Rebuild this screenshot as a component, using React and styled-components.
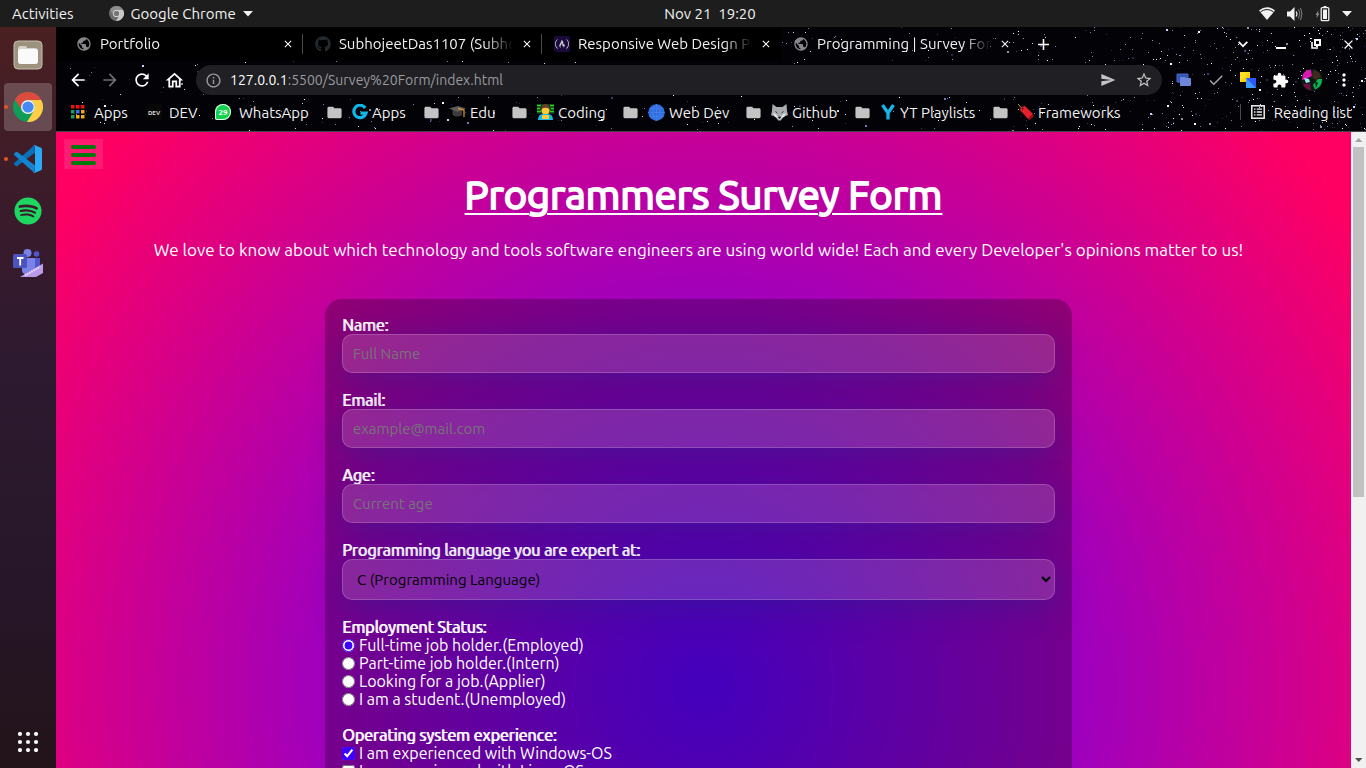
import React from "react";
import styled, { createGlobalStyle } from "styled-components";
import {
  MdArrowBack, MdArrowForward, MdRefresh, MdOutlineHome, MdInfoOutline, MdSend,
  MdStarBorder, MdExtension, MdMoreVert, MdPublic, MdCheck, MdFolder, MdAdd, MdClose,
} from "react-icons/md";
import { FaSpotify, FaGithub, FaFreeCodeCamp } from "react-icons/fa";

const Global = createGlobalStyle`
  * { box-sizing: border-box; }
  body { margin: 0; background: #000; font-family: Ubuntu, "Noto Sans", "Open Sans", sans-serif; }
  button, input, select { font-family: inherit; }
`;

const Desktop = styled.div`
  display: flex;
  flex-direction: column;
  height: 100vh;
  overflow: hidden;
`;

/* ---------- system bar ---------- */
const SystemBar = styled.header`
  display: grid;
  grid-template-columns: 1fr auto 1fr;
  align-items: center;
  flex: none;
  height: 27px;
  padding: 0 14px 0 12px;
  background: #1d1d1d;
  color: #f2f2f2;
`;
const SystemSide = styled.div`
  display: flex;
  align-items: center;
  justify-content: ${(p) => (p.$end ? "flex-end" : "flex-start")};
  gap: ${(p) => (p.$end ? "12px" : "35px")};
`;
const SystemButton = styled.button`
  display: flex;
  align-items: center;
  gap: 7px;
  height: 26px;
  padding: 0;
  border: 0;
  background: none;
  color: inherit;
  font-size: 15px;
  white-space: pre;
`;
const Clock = styled(SystemButton)`
  margin-left: 56px;
`;

/* ---------- dock ---------- */
const Workspace = styled.div`
  display: flex;
  flex: 1;
  min-height: 0;
`;
const Dock = styled.nav`
  display: flex;
  flex-direction: column;
  align-items: center;
  flex: none;
  gap: 4px;
  width: 56px;
  padding: 4px 0 2px;
  background: linear-gradient(#4a2022, #3a1b2b 25%, #2e1a30 45%, #27162a 75%, #221419);
`;
const DockItem = styled.button`
  display: flex;
  align-items: center;
  justify-content: center;
  position: relative;
  width: 48px;
  height: 48px;
  margin-top: ${(p) => (p.$last ? "auto" : "0")};
  padding: 0;
  border: 0;
  border-radius: 4px;
  background: ${(p) => (p.$active ? "rgba(255,255,255,.2)" : "none")};
  &::before {
    content: "";
    display: ${(p) => (p.$running ? "block" : "none")};
    position: absolute;
    left: 0;
    top: 22px;
    width: 4px;
    height: 4px;
    border-radius: 50%;
    background: #e95420;
  }
`;

/* ---------- browser ---------- */
const Browser = styled.div`
  display: flex;
  flex-direction: column;
  flex: 1;
  min-width: 0;
`;
const BrowserHead = styled.div`
  position: relative;
  flex: none;
  height: 105px;
  border-bottom: 1px solid #45434b;
  background: #030207;
  color: #f1f1f1;
  overflow: hidden;
`;
const Sky = styled.svg`
  position: absolute;
  inset: 0;
  width: 100%;
  height: 100%;
`;
const HeadRows = styled.div`
  position: relative;
  display: flex;
  flex-direction: column;
`;
const TabRow = styled.div`
  display: flex;
  align-items: center;
  height: 34px;
`;
const Tab = styled.div`
  display: flex;
  align-items: center;
  flex: 0 1 239px;
  min-width: 0;
  gap: 8px;
  height: 34px;
  padding: 0 9px 0 12px;
  background: ${(p) => (p.$active ? "none" : "#000")};
`;
const TabLead = styled.div`
  flex: none;
  width: 8px;
  height: 34px;
  background: #000;
`;
const TabIcon = styled.span`
  display: flex;
  flex: none;
  width: 16px;
  height: 16px;
`;
const TabTitle = styled.span`
  flex: 1;
  min-width: 0;
  overflow: hidden;
  white-space: nowrap;
  font-size: 15px;
  line-height: 20px;
  mask-image: linear-gradient(to right, #000 calc(100% - 28px), transparent);
`;
const TabDivider = styled.span`
  flex: none;
  width: 1px;
  height: 20px;
  margin-left: -1px;
  background: ${(p) => (p.$hidden ? "transparent" : "#4a4a4e")};
`;
const IconButton = styled.button`
  display: flex;
  align-items: center;
  justify-content: center;
  flex: none;
  width: ${(p) => p.$w || 32}px;
  height: ${(p) => p.$h || 30}px;
  padding: 0;
  border: 0;
  background: none;
  color: ${(p) => p.$color || "#fff"};
`;
const WindowButtons = styled.div`
  display: flex;
  align-items: center;
  margin-left: auto;
  padding-right: 2px;
`;
const Toolbar = styled.div`
  display: flex;
  align-items: center;
  height: 38px;
  padding: 4px 6px;
`;
const AddressBar = styled.div`
  display: flex;
  align-items: center;
  flex: 1;
  gap: 8px;
  height: 30px;
  margin: 0 6px;
  padding: 0 2px 0 9px;
  border-radius: 15px;
  background: #202024;
  color: #9a9a9f;
  font-size: 14px;
`;
const Url = styled.span`
  flex: 1;
  white-space: nowrap;
`;
const UrlHost = styled.span`
  color: #fff;
`;
const Bookmarks = styled.div`
  display: flex;
  align-items: center;
  height: 26px;
  padding-left: 15px;
  font-size: 15px;
`;
const Bookmark = styled.a`
  display: flex;
  align-items: center;
  flex: none;
  gap: ${(p) => p.$gap}px;
  width: ${(p) => p.$w}px;
  color: inherit;
  text-decoration: none;
  white-space: nowrap;
`;
const BookmarkText = styled.span`
  display: flex;
  align-items: center;
  gap: 4px;
`;
const ReadingList = styled.button`
  display: flex;
  align-items: center;
  gap: 9px;
  height: 16px;
  margin-left: auto;
  padding: 0 14px 0 10px;
  border: 0;
  border-left: 1px solid #4a4a4e;
  background: none;
  color: inherit;
  font-size: 15px;
  white-space: nowrap;
`;

/* ---------- page ---------- */
const View = styled.div`
  display: flex;
  flex: 1;
  min-height: 0;
`;
const Viewport = styled.main`
  flex: 1;
  min-width: 0;
  overflow: hidden;
`;
const Page = styled.div`
  min-height: 1109px;
  padding: 7px 8px 0;
  background: radial-gradient(circle, #5c00ff, #9e00be 44%, #ff0062 94%);
  color: #fff;
`;
const MenuButton = styled.button`
  display: flex;
  flex-direction: column;
  justify-content: center;
  gap: 4px;
  width: 39px;
  height: 30px;
  padding: 2px 7px 0;
  border: 0;
  background: rgba(255, 255, 255, 0.1);
`;
const MenuBar = styled.span`
  height: 4px;
  border-radius: 2px;
  background: #007a0a;
`;
const Title = styled.h1`
  margin: 0;
  font-size: 40px;
  line-height: 52px;
  font-weight: 400;
  -webkit-text-stroke: 2px currentColor;
  text-align: center;
  text-decoration: underline;
  text-decoration-thickness: 2px;
  text-underline-offset: 4px;
  white-space: nowrap;
`;
const Body = styled.div`
  padding-right: 10px;
`;
const Intro = styled.p`
  margin: 16px 0 36px;
  font-size: 17px;
  line-height: 26px;
  text-align: center;
`;
const Card = styled.form`
  display: flex;
  flex-direction: column;
  gap: 18px;
  max-width: 747px;
  min-height: 780px;
  margin: 0 auto;
  padding: 17px;
  border-radius: 17px;
  background: rgba(0, 0, 0, 0.26);
`;
const Field = styled.div`
  display: flex;
  flex-direction: column;
`;
const FieldLabel = styled.label`
  color: #fff;
  font-size: 16px;
  line-height: 18px;
  text-shadow: 1px 0 0 currentColor;
`;
const glass = `
  width: 100%;
  border: 1px solid rgba(255, 255, 255, 0.18);
  border-radius: 10px;
  background-color: rgba(255, 255, 255, 0.15);
  box-shadow: 0 8px 32px 0 rgba(31, 38, 135, 0.37);
  font-size: 15px;
`;
const TextInput = styled.input`
  ${glass}
  height: 39px;
  padding: 0 10px;
  color: #fff;
  &::placeholder { color: #757575; opacity: 1; }
`;
const Select = styled.select`
  ${glass}
  height: 41px;
  padding: 0 10px;
  color: #000;
`;
const Group = styled.fieldset`
  display: flex;
  flex-direction: column;
  margin: 0;
  padding: 0;
  border: 0;
`;
const Legend = styled.legend`
  padding: 0;
  font-size: 16px;
  line-height: 18px;
  text-shadow: 1px 0 0 currentColor;
`;
const Choice = styled.label`
  display: flex;
  align-items: center;
  gap: 4px;
  font-size: 16px;
  line-height: 18px;
  input { width: 13px; height: 13px; margin: 0; accent-color: #3b00ff; }
`;

/* ---------- scroll bar ---------- */
const ScrollTrack = styled.div`
  display: flex;
  flex-direction: column;
  align-items: center;
  flex: none;
  width: 15px;
  background: #f1f1f1;
`;
const ScrollThumb = styled.div`
  flex: 0 0 55%;
  width: 11px;
  margin-bottom: auto;
  background: #c1c1c1;
`;
const ScrollArrow = styled.svg`
  flex: none;
  width: 15px;
  height: 15px;
`;

/* ---------- drawings ---------- */
function makeStars() {
  let seed = 77;
  const rnd = () => {
    seed = (seed * 16807) % 2147483647;
    return seed / 2147483647;
  };
  const tones = ["#fff", "#c9d6ff", "#6f7ab8", "#3b3d66", "#8d8fa8", "#2a2848"];
  const list = [];
  for (let i = 0; i < 2800; i++) {
    const x = rnd();
    const y = Math.floor(rnd() * 104);
    const keep = x < 0.72 ? 0.2 : 0.25 + (x - 0.72) * 2.6;
    if (rnd() > keep) continue;
    const big = rnd() > 0.92;
    list.push({ x: (x * 100).toFixed(2), y, w: big ? 2 : 1, c: tones[Math.floor(rnd() * tones.length)] });
  }
  return list;
}
const stars = makeStars();

const Stars = () => (
  <Sky aria-hidden="true" shapeRendering="crispEdges">
    {stars.map((s, i) => (
      <rect key={i} x={`${s.x}%`} y={s.y} width={s.w} height={s.w} fill={s.c} />
    ))}
  </Sky>
);

const ChromeIcon = ({ size, gray }) => {
  const c = gray ? ["#8d8d8d", "#6d6d6d", "#c8c8c8", "#777"] : ["#dd4b3e", "#109d58", "#ffcd46", "#4688f4"];
  return (
    <svg width={size} height={size} viewBox="0 0 30 30">
      <circle cx="15" cy="15" r="15" fill={c[1]} />
      <path d="M2 7.5A15 15 0 0 1 28.2 8H15a7 7 0 0 0-6.2 10.3z" fill={c[0]} />
      <path d="M28.2 8A15 15 0 0 1 14 30l7-11.5A7 7 0 0 0 15 8z" fill={c[2]} />
      <circle cx="15" cy="15" r="7" fill="#f1f1f1" />
      <circle cx="15" cy="15" r="5.6" fill={c[3]} />
    </svg>
  );
};
const FilesIcon = () => (
  <svg width="30" height="30" viewBox="0 0 30 30">
    <rect x="1" y="1" width="28" height="28" rx="4" fill="#9c927d" stroke="#c8bfae" />
    <path d="M5 9q0-3 3-3h4q2 0 2 2h8q3 0 3 3v10q0 3-3 3H8q-3 0-3-3z" fill="#d9d4cb" />
    <rect x="5" y="9" width="20" height="15" rx="3" fill="#fafafa" />
  </svg>
);
const CodeIcon = () => (
  <svg width="28" height="28" viewBox="0 0 28 28">
    <path d="M0 18.2 20.5 0 21 7.5 3.4 20.9q-.8.5-1.5 0L.2 19.4z" fill="#0a70b8" />
    <path d="M.2 8.6 1.9 7.1q.7-.5 1.5 0L21 20.5 20.5 28 .1 10z" fill="#1385cf" />
    <path d="M20.5 0 27 2.8q1 .5 1 1.6v19.200q0 1.100-1 1.600L20.5 28q-.9.1-1.5-.8 1.800.7 2-1.200V2q-.2-1.900-2-1.200.6-.9 1.500-.8z" fill="#29a9f3" />
  </svg>
);
const TeamsIcon = () => (
  <svg width="30" height="28" viewBox="0 0 30 28">
    <circle cx="14.5" cy="4" r="4" fill="#7b83eb" />
    <circle cx="23.5" cy="5" r="2.8" fill="#5059c9" />
    <path d="M17 9h10v8q0 5-5 5h-5z" fill="#5059c9" />
    <path d="M9 9h13v10q0 7-7 7t-6-7z" fill="#7b83eb" />
    <rect x="0" y="5" width="14" height="14" rx="1.5" fill="#4b53bc" />
    <path d="M4 9h6.5M7.2 9v7.5" stroke="#fff" strokeWidth="1.8" />
    <path d="M7 28 30 14.5V24l-7 4z" fill="#b99be8" />
    <path d="m12 26.5 15-8.7" stroke="#e9dcff" strokeWidth="2" strokeDasharray="1.6 .8" />
  </svg>
);
const DotsIcon = () => (
  <svg width="20" height="20" viewBox="0 0 20 20">
    {[2, 10, 18].map((y) => [2, 10, 18].map((x) => <circle key={`${x}-${y}`} cx={x} cy={y} r="2.1" fill="#f5f5f5" />))}
  </svg>
);
const ColorGrid = () => {
  const c = ["#f01010", "#f01010", "#f01010", "#10a556", "#3f6fe8", "#f0a810", "#10a556", "#f0b010", "#f0b010"];
  return (
    <svg width="14" height="14" viewBox="0 0 14 14">
      {c.map((f, i) => <rect key={i} x={(i % 3) * 5} y={Math.floor(i / 3) * 5} width="3.5" height="3.5" fill={f} />)}
    </svg>
  );
};
const Caret = () => (
  <svg width="10" height="6" viewBox="0 0 10 6"><path d="M0 0h10L5 5.500z" fill="#f2f2f2" /></svg>
);
const Badge = styled.span`
  display: flex;
  align-items: center;
  justify-content: center;
  width: 16px;
  height: 16px;
  border-radius: ${(p) => (p.$round ? "50% 50% 50% 2px" : "2px")};
  background: ${(p) => p.$bg};
  box-shadow: ${(p) => (p.$round ? "inset 0 0 0 1px #e8ffe8" : "none")};
  color: ${(p) => (p.$round ? "#fff" : "#d8d8d8")};
  font-size: ${(p) => (p.$round ? "8px" : "6px")};
  font-weight: 700;
`;

const GIcon = () => (
  <svg width="16" height="16" viewBox="0 0 16 16">
    <path d="M13.2 4A6.2 6.2 0 1 0 14 9.2H8.5" fill="none" stroke="#10b5ea" strokeWidth="3.2" />
  </svg>
);
const CapIcon = () => (
  <svg width="17" height="16" viewBox="0 0 17 16">
    <path d="M3.5 6v5q5 3 9.5 0V6z" fill="#3c3c3e" />
    <path d="M0 4.5 9 2l8 2.5L8.5 8z" fill="#5c5c5e" />
    <path d="M9 4.5 15 6v7" fill="none" stroke="#c9982c" strokeWidth="1.3" />
  </svg>
);
const CoderIcon = () => (
  <svg width="17" height="16" viewBox="0 0 17 16">
    <rect width="17" height="10" fill="#123a18" />
    <path d="M0 1.5h4M0 4.5h3M0 7.5h4M13 1.5h4M14 4.5h3M13 7.5h4" stroke="#1ed428" strokeWidth="1.4" />
    <circle cx="8.5" cy="6.5" r="4" fill="#ffc83d" />
    <path d="M4.5 5q0-5 4-5t4 5q-4-2.500-8 0z" fill="#6b3d27" />
    <path d="M1 16q0-6 5-6h5q5 0 5 6z" fill="#16b9e8" />
    <rect x="5" y="11" width="7" height="4" fill="#ffc83d" />
  </svg>
);
const GlobeIcon = () => (
  <svg width="17" height="17" viewBox="0 0 17 17">
    <circle cx="8.5" cy="8.5" r="8.3" fill="#2f6fe0" />
    <path d="M0 8.5h17M1.5 4.5h14M1.5 12.5h14M8.5 0v17M8.5 0q-8 8.500 0 17M8.5 0q8 8.500 0 17" fill="none" stroke="#5088ee" strokeWidth=".5" />
  </svg>
);
const WolfIcon = () => (
  <svg width="17" height="17" viewBox="0 0 17 17">
    <path d="m1.500 0 4 3h6l4-3 .5 7 1 4-4.500 2L9.800 16.500H7.200L4.500 13 0 11l1-4z" fill="#a9adb0" />
    <path d="m2 9 3 1 2 3h3l2-3 3-1-2 4-3 1-1.500 2L7 14l-3-1z" fill="#dfe2e3" />
    <path d="M4.500 7.500 6.500 9M12.500 7.500 10.500 9M7.300 13h2.400l-1.200 1.800z" stroke="#33383b" />
  </svg>
);
const YIcon = () => (
  <svg width="16" height="16" viewBox="0 0 16 16">
    <path d="m2.500 1 5.500 8 5.500-8M8 8v7.500" fill="none" stroke="#12b4ea" strokeWidth="3.3" />
  </svg>
);
const TagIcon = () => (
  <svg width="16" height="16" viewBox="0 0 16 16">
    <path d="m2 6 1-3 4-1 8 8-5 5z" fill="#e3202c" />
    <path d="m10 15 5-5 .5 2.500-4 3.500z" fill="#a50f1a" />
    <path d="M0 0 4 4.500" stroke="#c98a3c" />
    <circle cx="4.5" cy="4.5" r="1" fill="#4b0a0d" />
  </svg>
);
const WifiIcon = () => (
  <svg width="16" height="13" viewBox="0 0 16 13">
    <path d="M0 3.500Q8-3 16 3.500L8 13z" fill="#f2f2f2" />
    <path d="M1.500 4.800q6.500-4.600 13 0" fill="none" stroke="#1d1d1d" />
  </svg>
);
const SoundIcon = () => (
  <svg width="16" height="14" viewBox="0 0 16 14">
    <path d="M0 4.500h3L7.500 0v14L3 9.500H0z" fill="#f2f2f2" />
    <path d="M9.200 4.500q1.600 2.500 0 5" fill="none" stroke="#f2f2f2" strokeWidth="1.3" />
    <path d="M11.200 2.500q3 4.500 0 9M13.300 1q3 6 0 12" fill="none" stroke="#777" strokeWidth="1.1" />
  </svg>
);
const BatteryIcon = () => (
  <svg width="15" height="16" viewBox="0 0 15 16">
    <path d="M3.500 4 .5 9H2l-.5 3.500 3-5H3z" fill="#8a8a8a" />
    <path d="M8.500 0h3v1.500h-3z" fill="#f2f2f2" />
    <rect x="6.2" y="1.7" width="7.6" height="13" rx="1" fill="none" stroke="#f2f2f2" strokeWidth="1.3" />
    <rect x="8" y="3.5" width="4" height="9.5" fill="#f2f2f2" />
  </svg>
);
const ChevronIcon = () => (
  <svg width="10" height="7" viewBox="0 0 10 7"><path d="m.7.9 4.300 4.300L9.300.9" fill="none" stroke="#fff" strokeWidth="1.7" /></svg>
);
const MinIcon = () => (
  <svg width="10" height="10" viewBox="0 0 10 10"><path d="M0 9h10" stroke="#fff" strokeWidth="2" /></svg>
);
const RestoreIcon = () => (
  <svg width="10" height="10" viewBox="0 0 10 10">
    <path d="M4 1h5v5H4z" fill="none" stroke="#fff" strokeWidth="2" />
    <path d="M1 3v6h6" fill="none" stroke="#fff" strokeWidth="1.6" />
  </svg>
);
const WindowsExt = () => (
  <svg width="16" height="14" viewBox="0 0 16 14">
    <path d="M1 1h11v8H1z" fill="#3556b4" stroke="#4668c8" />
    <path d="M4 5q0-1 1-1h4l1 1h4q1 0 1 1v6q0 1-1 1H4z" fill="#6f87d8" />
  </svg>
);
const SquaresExt = () => (
  <svg width="16" height="16" viewBox="0 0 16 16">
    <path d="M0 0h10v10H0z" fill="#fc0" /><path d="M0 0h10L0 10z" fill="#ffde2a" />
    <path d="M6 6h10v10H6z" fill="#2f55ff" /><path d="M6 6v10h10z" fill="#3b9bff" />
  </svg>
);
const Avatar = () => (
  <svg width="22" height="22" viewBox="0 0 22 22">
    <circle cx="11" cy="11" r="11" fill="#0b1a12" />
    <path d="M2 5q4-5 8-4l1 6-6 3-4 1z" fill="#d817b5" />
    <path d="M12 1q7 1 8 7l-5 3-4-3z" fill="#3d2a1e" />
    <path d="M21 10q0 8-7 10.500L12 16l5-6z" fill="#10b553" />
    <path d="M2 15q2 5 8 6.500l-1-7z" fill="#6d0f43" />
    <path d="m3 9 5 1 1 3-4 1z" fill="#a8e3e8" />
    <path d="m14 12 3 2-2 5z" fill="#042a10" />
  </svg>
);
const ReadingIcon = () => (
  <svg width="14" height="14" viewBox="0 0 14 14">
    <rect x=".8" y=".8" width="12.4" height="12.4" fill="none" stroke="#f1f1f1" strokeWidth="1.5" />
    <path d="M3 4.200h1.500M3 7h1.500M3 9.800h1.500M5.700 4.200H11M5.700 7H11M5.700 9.800H11" stroke="#f1f1f1" strokeWidth="1.3" />
  </svg>
);

const tabs = [
  { title: "Portfolio", icon: <MdPublic size={16} color="#85878c" /> },
  { title: "SubhojeetDas1107 (Subhojeet Das)", icon: <FaGithub size={16} color="#24292e" /> },
  { title: "Responsive Web Design Projects", icon: <Badge $bg="#1b0a3c"><FaFreeCodeCamp size={14} /></Badge> },
  { title: "Programming | Survey Form", icon: <MdPublic size={16} color="#85878c" />, active: true },
];

const folder = <MdFolder size={17} color="#c4c4c4" />;
const bookmarks = [
  { text: "Apps", icon: <ColorGrid />, w: 75, gap: 9 },
  { text: "DEV", icon: <Badge $bg="#080808">DEV</Badge>, w: 69, gap: 7 },
  { text: "WhatsApp", icon: <Badge $bg="#12d34e" $round>29</Badge>, w: 111, gap: 8 },
  { text: "Apps", icon: folder, emoji: <GIcon />, w: 97, gap: 9 },
  { text: "Edu", icon: folder, emoji: <CapIcon />, w: 88, gap: 9 },
  { text: "Coding", icon: folder, emoji: <CoderIcon />, w: 111, gap: 9 },
  { text: "Web Dev", icon: folder, emoji: <GlobeIcon />, w: 123, gap: 9 },
  { text: "Github", icon: folder, emoji: <WolfIcon />, w: 109, gap: 9 },
  { text: "YT Playlists", icon: folder, emoji: <YIcon />, w: 138, gap: 9 },
  { text: "Frameworks", icon: folder, emoji: <TagIcon />, w: 140, gap: 9 },
];

const jobs = ["Full-time job holder.(Employed)", "Part-time job holder.(Intern)", "Looking for a job.(Applier)", "I am a student.(Unemployed)"];
const systems = ["I am experienced with Windows-OS", "I am experienced with Linux-OS", "I am experienced with Mac-OS"];

export default function App() {
  return (
    <Desktop>
      <Global />
      <SystemBar>
        <SystemSide>
          <SystemButton>Activities</SystemButton>
          <SystemButton><ChromeIcon size={15} gray />Google Chrome<Caret /></SystemButton>
        </SystemSide>
        <Clock>{"Nov 21  19:20"}</Clock>
        <SystemSide $end><WifiIcon /><SoundIcon /><BatteryIcon /><Caret /></SystemSide>
      </SystemBar>
      <Workspace>
        <Dock aria-label="Dock">
          <DockItem aria-label="Files"><FilesIcon /></DockItem>
          <DockItem aria-label="Chrome" $active $running><ChromeIcon size={30} /></DockItem>
          <DockItem aria-label="Code" $running><CodeIcon /></DockItem>
          <DockItem aria-label="Spotify"><FaSpotify size={28} color="#1ed760" /></DockItem>
          <DockItem aria-label="Teams"><TeamsIcon /></DockItem>
          <DockItem aria-label="Show applications" $last><DotsIcon /></DockItem>
        </Dock>
        <Browser>
          <BrowserHead>
            <Stars />
            <HeadRows>
              <TabRow>
                <TabLead />
                {tabs.map((t, i) => (
                  <React.Fragment key={t.title}>
                    <Tab $active={t.active}>
                      <TabIcon>{t.icon}</TabIcon>
                      <TabTitle>{t.title}</TabTitle>
                      <IconButton $w={12} $h={16} aria-label="Close tab"><MdClose size={14} /></IconButton>
                    </Tab>
                    <TabDivider $hidden={i > 1} />
                  </React.Fragment>
                ))}
                <IconButton aria-label="New tab" $w={46}><MdAdd size={19} /></IconButton>
                <WindowButtons>
                  <IconButton aria-label="Search tabs" $w={38}><ChevronIcon /></IconButton>
                  <IconButton aria-label="Minimize" $w={38}><MinIcon /></IconButton>
                  <IconButton aria-label="Restore"><RestoreIcon /></IconButton>
                  <IconButton aria-label="Close"><MdClose size={15} /></IconButton>
                </WindowButtons>
              </TabRow>
              <Toolbar>
                <IconButton aria-label="Back"><MdArrowBack size={20} /></IconButton>
                <IconButton aria-label="Forward" $color="#6d6d72"><MdArrowForward size={20} /></IconButton>
                <IconButton aria-label="Reload"><MdRefresh size={20} /></IconButton>
                <IconButton aria-label="Home"><MdOutlineHome size={21} /></IconButton>
                <AddressBar>
                  <MdInfoOutline size={17} />
                  <Url><UrlHost>127.0.0.1</UrlHost>:5500/Survey%20Form/index.html</Url>
                  <IconButton aria-label="Send" $w={24} $color="#c4c4c4"><MdSend size={16} /></IconButton>
                  <IconButton aria-label="Bookmark" $color="#c4c4c4"><MdStarBorder size={18} /></IconButton>
                </AddressBar>
                <IconButton aria-label="Windows extension"><WindowsExt /></IconButton>
                <IconButton aria-label="Tasks" $color="#a5a5a5"><MdCheck size={18} /></IconButton>
                <IconButton aria-label="Squares extension"><SquaresExt /></IconButton>
                <IconButton aria-label="Extensions"><MdExtension size={17} /></IconButton>
                <IconButton aria-label="Profile"><Avatar /></IconButton>
                <IconButton aria-label="More"><MdMoreVert size={20} /></IconButton>
              </Toolbar>
              <Bookmarks>
                {bookmarks.map((b, i) => (
                  <Bookmark key={i} href="#" $w={b.w} $gap={b.gap}>
                    {b.icon}
                    <BookmarkText>{b.emoji}{b.text}</BookmarkText>
                  </Bookmark>
                ))}
                <ReadingList><ReadingIcon />Reading list</ReadingList>
              </Bookmarks>
            </HeadRows>
          </BrowserHead>
          <View>
            <Viewport>
              <Page>
                <MenuButton aria-label="Menu"><MenuBar /><MenuBar /><MenuBar /></MenuButton>
                <Title>Programmers Survey Form</Title>
                <Body>
                  <Intro>
                    We love to know about which technology and tools software engineers are using world wide! Each and every Developer's opinions matter to us!
                  </Intro>
                  <Card>
                    <Field>
                      <FieldLabel htmlFor="name">Name:</FieldLabel>
                      <TextInput id="name" placeholder="Full Name" />
                    </Field>
                    <Field>
                      <FieldLabel htmlFor="email">Email:</FieldLabel>
                      <TextInput id="email" type="email" placeholder="example@mail.com" />
                    </Field>
                    <Field>
                      <FieldLabel htmlFor="age">Age:</FieldLabel>
                      <TextInput id="age" placeholder="Current age" />
                    </Field>
                    <Field>
                      <FieldLabel htmlFor="lang">Programming language you are expert at:</FieldLabel>
                      <Select id="lang"><option>C (Programming Language)</option></Select>
                    </Field>
                    <Group>
                      <Legend>Employment Status:</Legend>
                      {jobs.map((j, i) => (
                        <Choice key={j}><input type="radio" name="job" defaultChecked={i === 0} />{j}</Choice>
                      ))}
                    </Group>
                    <Group>
                      <Legend>Operating system experience:</Legend>
                      {systems.map((s, i) => (
                        <Choice key={s}><input type="checkbox" defaultChecked={i === 0} />{s}</Choice>
                      ))}
                    </Group>
                  </Card>
                </Body>
              </Page>
            </Viewport>
            <ScrollTrack>
              <ScrollArrow viewBox="0 0 15 15"><path d="M4 10h7.500L7.700 6z" fill="#a3a3a3" /></ScrollArrow>
              <ScrollThumb />
              <ScrollArrow viewBox="0 0 15 15"><path d="M4 5h7.500L7.700 9z" fill="#505050" /></ScrollArrow>
            </ScrollTrack>
          </View>
        </Browser>
      </Workspace>
    </Desktop>
  );
}
